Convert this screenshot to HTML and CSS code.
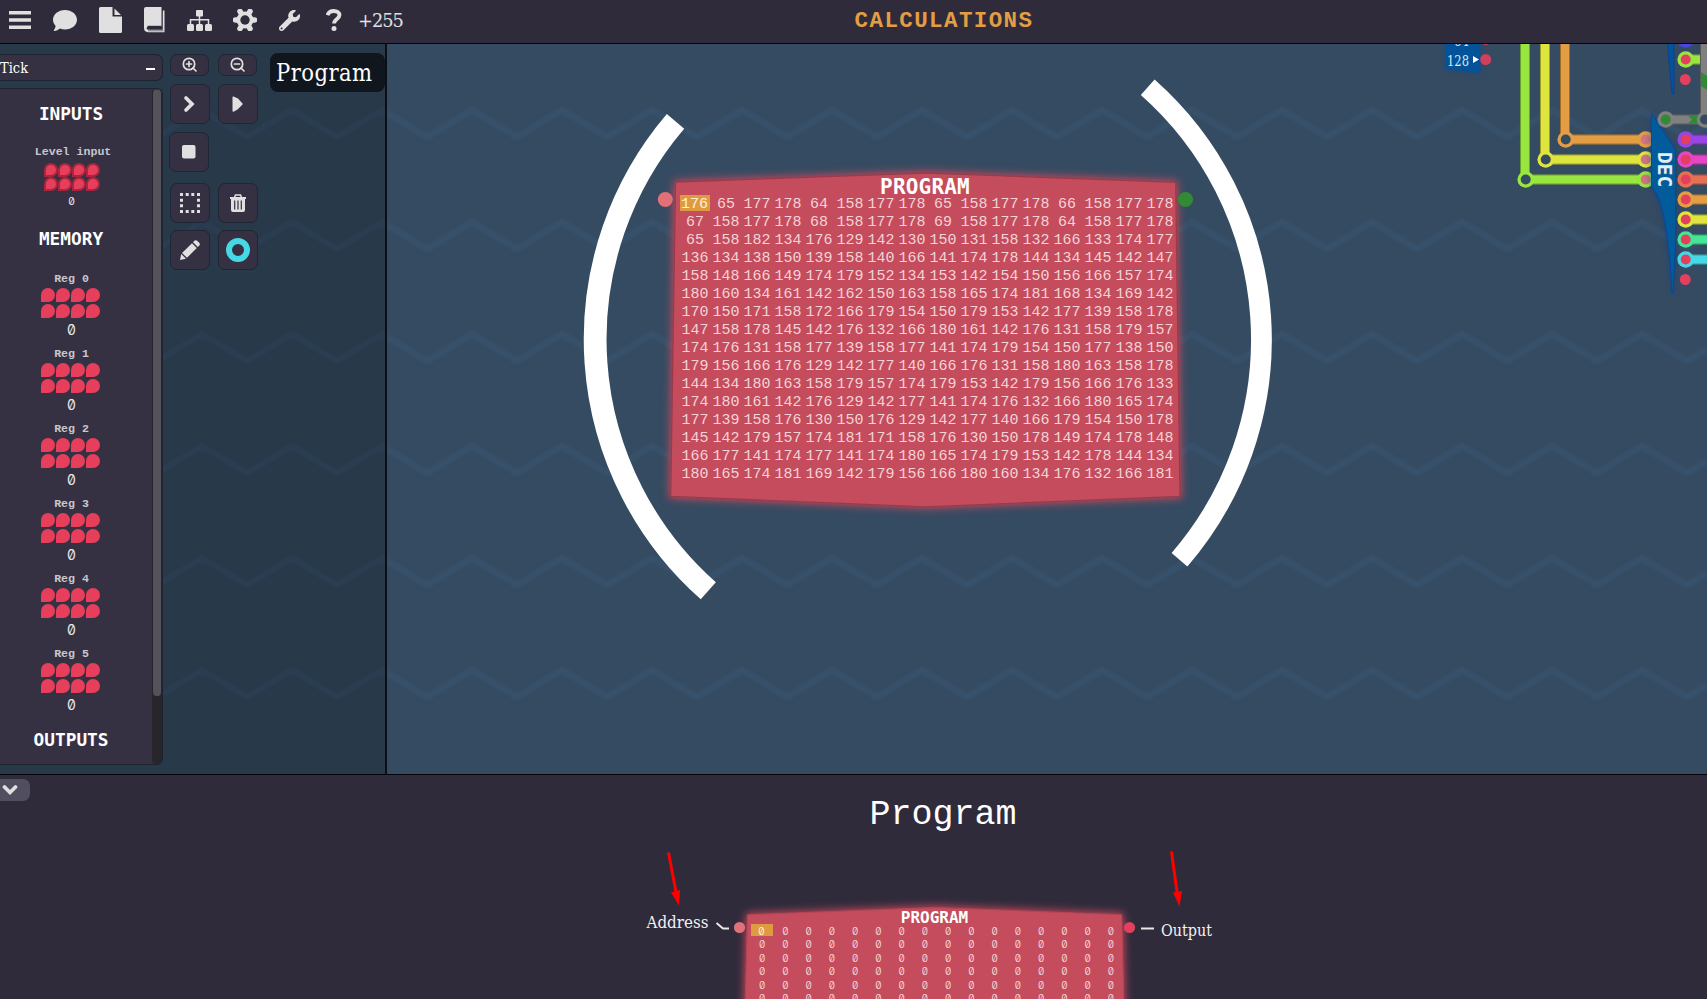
FILE: index.html
```html
<!DOCTYPE html>
<html lang="en">
<head>
<meta charset="utf-8">
<title>Calculations</title>
<link rel="stylesheet" href="styles.css">
</head>
<body>
<div class="app">
  <header class="topbar">
    <nav class="tools">
      <svg width="22" height="18" viewBox="0 0 22 18"><path d="M0 0h22v3.500H0zM0 7.200h22v3.500H0zM0 14.400h22V18H0z"/></svg>
      <svg width="24" height="21" viewBox="0 32 512 448" preserveAspectRatio="none"><path d="M256 32C114.600 32 0 125.100 0 240c0 49.600 21.400 95 57 130.700C50 421 22 450 18 460c-6 10 0 20 10 20 50 0 96-31.800 120.600-51.400 32.700 12.300 69 19.400 107.400 19.400 141.400 0 256-93.100 256-208S397.400 32 256 32z"/></svg>
      <svg width="23" height="26" viewBox="0 0 23 26"><path d="M1.500 0H13.500V9.500H23V24.500a1.500 1.500 0 0 1-1.500 1.500h-20A1.500 1.500 0 0 1 0 24.500v-23A1.500 1.500 0 0 1 1.500 0zM15.500 1.500L22 8h-6.500z"/></svg>
      <svg width="21" height="26" viewBox="0 0 21 26"><path d="M2 0H17.500V19.800H4.500C2 19.800 2 22.800 4.500 22.800H18.800V3.500H20.500V25.300H4C1.300 25 0 23.500 0 21V2A2 2 0 0 1 2 0z"/><path class="cut" d="M3.500 18.800H17.500V20H3.500z" /><path class="thin" d="M4 23.800H19.500"/></svg>
      <svg width="25" height="21" viewBox="0 0 25 21"><rect x="9" y="0" width="7" height="6.500" rx="1"/><rect x="0" y="14" width="7" height="7" rx="1.500"/><rect x="9" y="14" width="7" height="7" rx="1.500"/><rect x="18" y="14" width="7" height="7" rx="1.500"/><path class="line" d="M12.500 6V14M3.500 14V9.700H21.500V14"/></svg>
      <svg class="gear" width="24" height="22" viewBox="-12 -11 24 22"><g class="teeth"><path d="M-9.600 0H9.600M-5 -8.600L5 8.600M5 -8.600L-5 8.600"/></g><circle r="6.400" class="ring"/><circle r="4.700" class="hole"/></svg>
      <svg width="21" height="21" viewBox="0 0 512 512"><path d="M507.730 109.100c-2.240-9.030-13.540-12.090-20.120-5.510l-74.360 74.360-67.880-11.310-11.310-67.880 74.360-74.360c6.620-6.620 3.430-17.900-5.660-20.160-47.380-11.740-99.550.91-136.580 37.930-39.640 39.640-50.550 97.100-34.050 147.200L18.740 402.760c-24.990 24.990-24.990 65.510 0 90.500 24.990 24.990 65.510 24.990 90.500 0l213.210-213.210c50.120 16.710 107.470 5.680 147.370-34.220 37.070-37.070 49.700-89.320 37.910-136.730zM64 472c-13.250 0-24-10.750-24-24 0-13.260 10.750-24 24-24s24 10.740 24 24c0 13.250-10.750 24-24 24z"/></svg>
      <svg class="help" width="16" height="22" viewBox="0 0 16 22"><path class="quest" d="M1.600 6.200C2.500 3.300 4.800 2 7.700 2c3.400 0 5.700 1.700 5.700 4.300 0 3.800-5.300 3.600-5.300 8.200"/><circle cx="8" cy="19.400" r="2.500"/></svg>
      <span class="delta">+255</span>
    </nav>
    <h1 class="title">CALCULATIONS</h1>
  </header>

  <main class="stage">
    <svg class="board" width="1707" height="730" viewBox="0 44 1707 730">
      <defs>
        <pattern id="zig" x="-23" y="102" width="90" height="112" patternUnits="userSpaceOnUse">
          <path d="M-45 8L0 35L45 8L90 35L135 8" fill="none" stroke="#37516b" stroke-width="6.500"/>
        </pattern>
        <pattern id="zigLeft" x="-23" y="102" width="90" height="112" patternUnits="userSpaceOnUse">
          <path d="M-45 8L0 35L45 8L90 35L135 8" fill="none" stroke="#2a3d51" stroke-width="6.500"/>
        </pattern>
        <filter id="soft" x="0" y="0" width="100%" height="100%" color-interpolation-filters="sRGB"><feGaussianBlur stdDeviation="1.300"/></filter>
        <filter id="glow" x="-20%" y="-20%" width="140%" height="140%" color-interpolation-filters="sRGB"><feGaussianBlur stdDeviation="4.500"/></filter>
        <filter id="glowSmall" x="-80%" y="-20%" width="260%" height="140%"><feGaussianBlur stdDeviation="3"/></filter>
      </defs>
      <rect x="0" y="44" width="386" height="730" fill="#28394a"/>
      <rect x="0" y="44" width="386" height="730" fill="url(#zigLeft)" filter="url(#soft)"/>
      <rect x="386" y="44" width="1321" height="730" fill="#354b62"/>
      <rect x="386" y="44" width="1321" height="730" fill="url(#zig)" filter="url(#soft)"/>
      <rect x="385" y="44" width="2" height="730" fill="#0c1016"/>

      <path d="M675.500 182L926 173L1175.700 182.300L1180 496.500L926 506.800L670.700 496.500z" fill="#c84a5c" stroke="#c84a5c" stroke-width="3" filter="url(#glow)"/>
      <path d="M675.500 182L926 173L1175.700 182.300L1180 496.500L926 506.800L670.700 496.500z" fill="#c44c5c" stroke="#9c3a4b" stroke-width="1.300"/>
      <circle cx="665.300" cy="199.500" r="7.500" fill="#e27079"/>
      <circle cx="1185.500" cy="199.500" r="7.500" fill="#328a35"/>
      <path d="M675.500 121.300A336 336 0 0 0 708.300 590.800" fill="none" stroke="#fff" stroke-width="22.800"/>
      <path d="M1147.700 87.200A336.800 336.800 0 0 1 1179.500 559.700" fill="none" stroke="#fff" stroke-width="20.800"/>

      <path d="M1446 40H1480V73L1446 68.500z" fill="#0a4a99" opacity=".6" filter="url(#glowSmall)"/>
      <path d="M1446 40H1479.700V73L1446 68.500z" fill="#02539a"/>
      <text class="slab pin" x="1447" y="66" textLength="22" lengthAdjust="spacingAndGlyphs">128</text>
      <text class="slab pin" x="1454" y="46" textLength="15" lengthAdjust="spacingAndGlyphs">64</text>
      <path d="M1473 56L1479 59.500L1473 63z" fill="#fff"/>
      <circle cx="1485.700" cy="59.500" r="5.500" fill="#d23f5d"/>
      <circle cx="1485.700" cy="39.500" r="5.500" fill="#d23f5d"/>
      <g id="wires"></g>
    </svg>

    <section class="memory">
      <h2>PROGRAM</h2>
      <div class="cells" id="program"></div>
    </section>

    <aside class="inspector">
      <div class="tickbar"><span>Tick</span><i></i></div>
      <div class="state">
        <div class="list" id="state"></div>
        <div class="scroll"><b></b></div>
      </div>
    </aside>

    <div class="controls">
      <div class="row short">
        <button><svg width="16" height="16" viewBox="0 0 16 16"><circle class="mag" cx="7" cy="7" r="5.700"/><path class="mag" d="M11 11L14 14M4.500 7H9.500M7 4.500V9.500"/></svg></button>
        <button><svg width="16" height="16" viewBox="0 0 16 16"><circle class="mag" cx="7" cy="7" r="5.700"/><path class="mag" d="M11 11L14 14M4.500 7H9.500"/></svg></button>
      </div>
      <div class="row first">
        <button><svg width="16" height="18" viewBox="0 0 16 18"><path class="chev" d="M4 3L10 9L4 15"/></svg></button>
        <button><svg width="16" height="18" viewBox="0 0 16 18"><path d="M3.500 1.500Q2.500 1 2.500 2.500V16Q2.500 17 4 16.500L7.500 14.500L12.500 9.500Q13 9 12.500 8.500L8 3.500z"/></svg></button>
      </div>
      <div class="row stop">
        <button><svg width="14" height="14" viewBox="0 0 14 14"><rect width="13.500" height="13.500" rx="2"/></svg></button>
      </div>
      <div class="row">
        <button><svg width="20" height="20" viewBox="0 0 20 20"><path d="M0 0h3v3H0zM5.700 0h3v3h-3zM11.300 0h3v3h-3zM17 0h3v3h-3zM0 5.700h3v3H0zM17 5.700h3v3h-3zM0 11.300h3v3H0zM17 11.300h3v3h-3zM0 17h3v3H0zM5.700 17h3v3h-3zM11.300 17h3v3h-3zM17 17h3v3h-3z"/></svg></button>
        <button><svg width="16" height="18" viewBox="0 0 16 18"><path d="M0 3h16v2H0zM1 5h14v11a2 2 0 0 1-2 2H3a2 2 0 0 1-2-2z"/><path class="line" d="M4.500 3.500L5.500 1H10.500L11.500 3.500"/><path class="bars" d="M4.700 6.500V15.500M8 6.500V15.500M11.300 6.500V15.500"/></svg></button>
      </div>
      <div class="row">
        <button><svg width="20" height="20" viewBox="0 0 20 20"><path d="M0 20L1.200 14L6 18.700zM2 13L12 3.200L16.800 8L7 17.800zM13 2.200L14.600 .6Q16 -.5 17.500 1L19 2.500Q20.500 4 19.400 5.400L17.800 7z"/></svg></button>
        <button><span class="swatch"></span></button>
      </div>
    </div>
    <div class="tooltip">Program</div>
  </main>

  <footer class="docs">
    <button class="fold"><svg width="16" height="12" viewBox="0 0 16 12"><path class="chev" d="M2.500 3L8 8.500L13.500 3"/></svg></button>
    <h2>Program</h2>
    <svg class="diagram" width="1707" height="224" viewBox="0 775 1707 224">
      <path d="M747.500 914.800L935 907.500L1121.700 914.800L1124 1010H745z" fill="#c84a5c" stroke="#c84a5c" stroke-width="3" filter="url(#glow)"/>
      <path d="M747.500 914.800L935 907.500L1121.700 914.800L1124 1010H745z" fill="#c44c5c" stroke="#b84455" stroke-width="1"/>
      <circle cx="739.500" cy="927.500" r="5.600" fill="#e27079"/>
      <circle cx="1129.500" cy="927.500" r="5.600" fill="#e43f5d"/>
      <path d="M716.500 923L723 928.500H729M1141 928.500H1154" fill="none" stroke="#e8e8e8" stroke-width="2"/>
      <path d="M668.500 852.500L676 892" stroke="#fe0000" stroke-width="3"/>
      <path d="M671 892.500L680 890L679 905.500z" fill="#fe0000"/>
      <path d="M1171.500 851.500L1177 892" stroke="#fe0000" stroke-width="3"/>
      <path d="M1173 892.500L1182 891L1179.500 906.500z" fill="#fe0000"/>
      <text class="slab label" x="646.500" y="928" textLength="62" lengthAdjust="spacingAndGlyphs">Address</text>
      <text class="slab label" x="1161" y="936" textLength="51" lengthAdjust="spacingAndGlyphs">Output</text>
    </svg>
    <section class="memory mini">
      <h2>PROGRAM</h2>
      <div class="cells" id="mini"></div>
    </section>
  </footer>
</div>
<script src="app.js"></script>
</body>
</html>
```
FILE: styles.css
```css
* { box-sizing: border-box; }
body { margin: 0; background: #2f2b3b; color: #fff; overflow: hidden; }
h1, h2, h3 { margin: 0; font-weight: 700; }
svg { display: block; flex: none; }
.app { display: flex; flex-direction: column; width: 1707px; height: 999px; overflow: hidden; }

.topbar { position: relative; flex: none; height: 44px; border-bottom: 1px solid #050508; background: #2f2b3b; }
.tools { display: flex; align-items: center; height: 40px; padding-left: 9px; gap: 22px; }
.tools svg { fill: #e0e0e0; }
.tools .gear { margin-left: -1px; }
.tools .help { margin-left: 4px; }
.cut { fill: #2f2b3b; }
.thin { stroke: #2f2b3b; stroke-width: .6; }
.line { fill: none; stroke: #e0e0e0; stroke-width: 1.5; }
.teeth path { stroke: #e0e0e0; stroke-width: 5.5; stroke-linecap: round; }
.ring { fill: none; stroke: #e0e0e0; stroke-width: 4; }
.hole { fill: #2f2b3b; }
.quest { fill: none; stroke: #e0e0e0; stroke-width: 3.900; }
.delta { margin-left: -6px; font: 17.800px/41px "DejaVu Serif", serif; letter-spacing: -1px; color: #e0e0e0; }
.title { position: absolute; left: 0; right: 0; top: 0; padding-left: 181px; text-align: center; font: 700 22.500px/42px "Liberation Mono", monospace; letter-spacing: 1.400px; color: #e39e44; }

.stage { position: relative; flex: none; height: 730px; display: flex; align-items: flex-start; overflow: hidden; }
.board { position: absolute; left: 0; top: 0; }
.slab { font-family: "DejaVu Serif", serif; fill: #fff; }
.pin { font-size: 14.500px; fill: #dce6f0; }
.label { font-size: 16px; fill: #f2f2f2; }
.dec { font: 700 19.500px "DejaVu Sans Mono", monospace; fill: #e4ecf4; }

.memory { position: absolute; left: 679.500px; top: 132px; width: 496px; text-align: center; }
.memory h2 { height: 20px; padding-right: 5px; font: 700 21px/22px "DejaVu Sans Mono", monospace; letter-spacing: .2px; }
.cells { display: grid; grid-template-columns: repeat(16, 31px); grid-auto-rows: 18px; font: 15px/17px "Liberation Mono", monospace; color: #f3d3d7; }
.cells .on { width: 30px; height: 16px; margin-top: -1px; background: #df9b41; color: #fff1d8; line-height: 19px; }

.inspector { position: relative; width: 164px; padding-top: 10px; }
.tickbar { display: flex; justify-content: space-between; align-items: center; width: 163px; height: 27px; padding-right: 7px; border: 1px solid #1d2430; border-left: 0; border-radius: 0 7px 7px 0; background: #353142; font: 14.500px/24px "DejaVu Serif Condensed", "DejaVu Serif", serif; }
.tickbar i { width: 9px; height: 2px; margin-top: 3px; background: #fff; }
.state { display: flex; width: 163px; height: 677px; margin-top: 7px; border: 1px solid #1d2430; border-left: 0; border-radius: 0 6px 6px 0; background: #353142; overflow: hidden; }
.list { width: 153px; padding-right: 10px; text-align: center; }
.scroll { width: 10px; background: #27262b; border-radius: 4px; }
.scroll b { display: block; height: 607px; border-radius: 4px; background: #54525b; border: 1px solid #26252b; border-top-color: #3a3940; border-bottom: 0; }
.list h3 { font: 700 17.800px "DejaVu Sans Mono", monospace; height: 56px; line-height: 56px; }
.list h3:first-child { height: 49px; line-height: 50px; }
.list h3:last-child { height: 44px; line-height: 45px; }
.reg { height: 75px; }
.reg .name { height: 21px; padding-left: 1px; font: 700 11.600px/24px "Liberation Mono", monospace; color: #c8c7cc; }
.bits { display: grid; grid-template-columns: repeat(4, 14px); gap: 2px 1px; margin-left: 41px; }
.bits i { height: 14px; border-radius: 7px 7px 7px 0; background: #e73f5b; }
.reg .val { height: 22px; font: 14px/24px "Inter", sans-serif; font-feature-settings: "zero"; color: #e8e8ea; padding-left: 1px; }
.reg.input { height: 73px; }
.input .name { height: 25px; line-height: 28px; padding-left: 4px; }
.input .bits { gap: 0; margin-left: 44px; }
.input .bits i { border: 2px solid #a92540; }
.reg.input .val { height: 20px; font-size: 10.500px; line-height: 21px; }

.controls { position: relative; display: flex; flex-direction: column; padding: 10px 0 0 6px; }
.row { display: flex; gap: 8px; margin-top: 7px; }
.row.first { margin-top: 8px; }
.row.short { margin: 0; gap: 9px; }
.row.stop { margin: 8px 0 4px -1px; }
button { display: flex; align-items: center; justify-content: center; width: 40px; height: 40px; padding: 0; border: 1px solid #1f2633; border-radius: 7px; background: #353142; }
button svg { fill: #e0e0e0; }
.short button { width: 39px; height: 22px; }
.mag { fill: none; stroke: #e0e0e0; stroke-width: 1.700; stroke-linecap: round; }
.chev { fill: none; stroke: #e0e0e0; stroke-width: 3.700; stroke-linecap: round; stroke-linejoin: miter; }
.bars { stroke: #353142; stroke-width: 1.200; }
.swatch { width: 24px; height: 24px; border: 6px solid #46d9e5; border-radius: 50%; }
.tooltip { position: relative; margin: 9px 0 0 12px; width: 115px; height: 39px; padding-left: 6px; border-radius: 8px; background: #0f161d; font: 23.500px/41px "DejaVu Serif Condensed", "DejaVu Serif", serif; letter-spacing: .45px; white-space: nowrap; }

.docs { position: relative; flex: none; height: 225px; border-top: 1px solid #050508; background: #2f2b3b; overflow: hidden; }
.diagram { position: absolute; left: 0; top: 0; }
.fold { width: 31px; height: 22px; margin: 4px 0 0 -1px; padding-right: 9px; border: 0; border-radius: 0 7px 7px 0; background: #514e60; }
.docs > h2 { height: 42px; margin-top: -5px; padding-left: 179px; text-align: center; font: 400 35px/38px "Liberation Mono", monospace; }
.mini { left: 750.500px; top: 134px; width: 372px; }
.mini h2 { height: 15px; padding-right: 4px; font-size: 16px; line-height: 18px; letter-spacing: 0; }
.mini .cells { grid-template-columns: repeat(16, 23.250px); grid-auto-rows: 13.450px; font: 10px/14px "Inter", sans-serif; font-feature-settings: "zero"; }
.mini .cells .on { width: 22px; height: 12px; margin-top: 0; line-height: 14px; }
```
FILE: app.js
```javascript
const program = `176 65 177 178 64 158 177 178 65 158 177 178 66 158 177 178
67 158 177 178 68 158 177 178 69 158 177 178 64 158 177 178
65 158 182 134 176 129 142 130 150 131 158 132 166 133 174 177
136 134 138 150 139 158 140 166 141 174 178 144 134 145 142 147
158 148 166 149 174 179 152 134 153 142 154 150 156 166 157 174
180 160 134 161 142 162 150 163 158 165 174 181 168 134 169 142
170 150 171 158 172 166 179 154 150 179 153 142 177 139 158 178
147 158 178 145 142 176 132 166 180 161 142 176 131 158 179 157
174 176 131 158 177 139 158 177 141 174 179 154 150 177 138 150
179 156 166 176 129 142 177 140 166 176 131 158 180 163 158 178
144 134 180 163 158 179 157 174 179 153 142 179 156 166 176 133
174 180 161 142 176 129 142 177 141 174 176 132 166 180 165 174
177 139 158 176 130 150 176 129 142 177 140 166 179 154 150 178
145 142 179 157 174 181 171 158 176 130 150 178 149 174 178 148
166 177 141 174 177 141 174 180 165 174 179 153 142 178 144 134
180 165 174 181 169 142 179 156 166 180 160 134 176 132 166 181`.split(/\s+/);

const fill = (id, values) => {
  document.getElementById(id).innerHTML =
    values.map((v, i) => `<span${i ? '' : ' class="on"'}>${v}</span>`).join('');
};
fill('program', program);
fill('mini', Array(96).fill(0));

const reg = (name, cls = '') =>
  `<div class="reg ${cls}"><div class="name">${name}</div><div class="bits">${'<i></i>'.repeat(8)}</div><div class="val">0</div></div>`;
document.getElementById('state').innerHTML =
  '<h3>INPUTS</h3>' + reg('Level input', 'input') + '<h3>MEMORY</h3>' +
  [0, 1, 2, 3, 4, 5].map(n => reg('Reg ' + n)).join('') + '<h3>OUTPUTS</h3>';

const bg = '#354b62';
const wire = (d, c) =>
  `<path d="${d}" fill="none" stroke="${c}" stroke-width="10"/><path d="${d}" fill="none" stroke="#000" stroke-opacity=".3" stroke-width="10"/><path d="${d}" fill="none" stroke="${c}" stroke-width="8"/>`;
const node = (x, y, c, inner, r = 5) =>
  `<circle cx="${x}" cy="${y}" r="8.300" fill="${c}"/><circle cx="${x}" cy="${y}" r="${r}" fill="${inner}"/>`;
const red = '#e43f5d';
let out = '';
[[1525, 179.5, '#99e641', '#b5976b'], [1545, 159.5, '#dfe53f', '#d0906f'], [1565, 139.5, '#e39e44', '#cf7c75']].forEach(([x, y, c]) => {
  out += wire(`M${x} 40V${y}H1645`, c) + node(x + .7, y, c, bg) + node(1645.7, y, c, '#d0757f');
});
out += '<path d="M1667 40H1674V94H1672z" fill="#02539a" stroke="#0f3f92"/>';
const dec = 'M1651.5 113.500L1675.500 150V245L1673 294H1672C1670 250 1665 203 1654 190L1651.500 186z';
out += `<path d="${dec}" fill="#0f3f92" opacity=".7" filter="url(#glowSmall)"/><path d="${dec}" fill="#025c9c" stroke="#0b479a"/>`;
out += '<text class="dec" transform="translate(1657.600 152) rotate(90)">DEC</text>';
out += wire('M1665 119.5H1705V40', '#808080');
out += '<path d="M1688 115.500H1700V123.500H1688L1692 119.500z" fill="#2f8a36"/><path d="M1701 72L1707 76V90L1701 86z" fill="#2f8a36"/>';
out += node(1665.7, 119.5, '#808080', '#328a35') + node(1705, 119.5, '#808080', bg);
out += wire('M1685 59.5H1700', '#99e641') + node(1685.7, 59.5, '#99e641', red) + node(1685.7, 39.5, '#4a46e5', '#4a46e5');
['#9646e5', '#e446c5', '#e47154', '#e39e44', '#dfe53f', '#46e598', '#46d9e5'].forEach((c, i) => {
  const y = 139.5 + i * 20;
  out += wire(`M1685 ${y}H1710`, c) + node(1685.7, y, c, red);
});
out += `<circle cx="1685.300" cy="79.500" r="5.500" fill="${red}"/><circle cx="1685.300" cy="279.500" r="5.500" fill="${red}"/>`;
document.getElementById('wires').innerHTML = out;
```
